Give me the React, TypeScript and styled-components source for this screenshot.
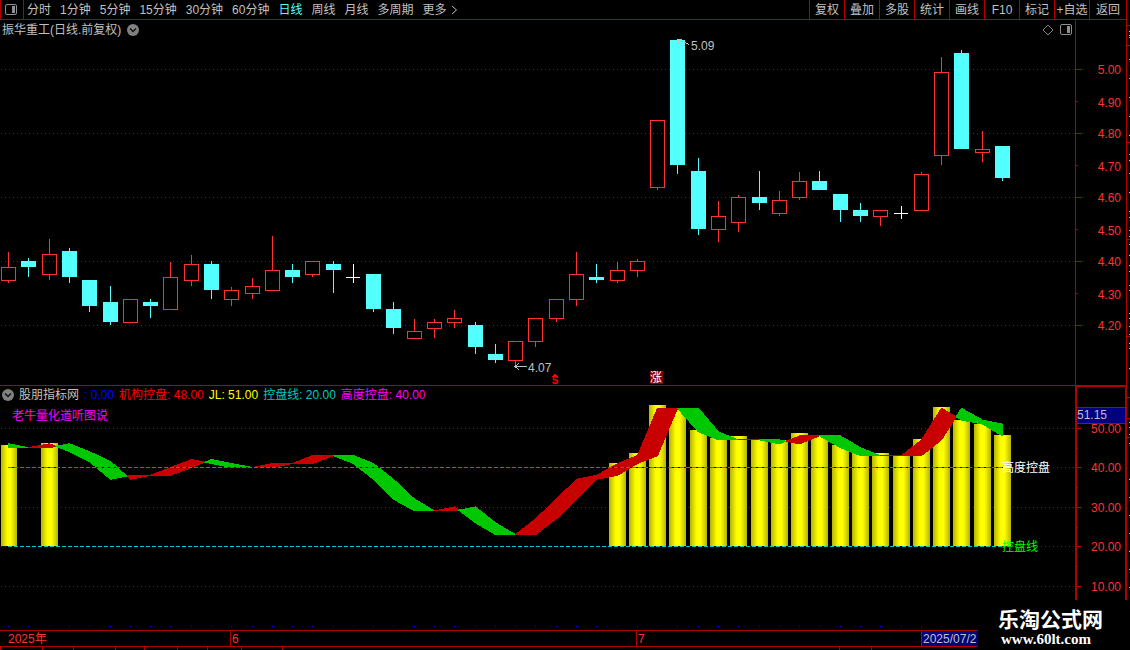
import React from "react";
import styled, { createGlobalStyle } from "styled-components";

const RED_LINE = "#b00000";
const RED = "#ff3232";
const CYAN = "#54ffff";
const GREY = "#c0c0c0";
const MAGENTA = "#ff00ff";
const TEAL = "#00c8c8";

const GlobalStyle = createGlobalStyle`
  * { box-sizing: border-box; }
  html, body { margin: 0; background: #000; }
  body {
    font-family: "Liberation Sans", "Noto Sans CJK SC", sans-serif;
    font-size: 12px;
    line-height: 16px;
    color: ${GREY};
  }
  svg { display: block; }
`;

const Screen = styled.div`
  position: relative;
  display: flex;
  height: 100vh;
  overflow: hidden;
  background: #000;
`;

const Terminal = styled.main`
  flex: 1;
  min-width: 0;
  display: flex;
  flex-direction: column;
  border-right: 1px solid ${RED_LINE};
`;

const Toolbar = styled.header`
  flex: none;
  display: flex;
  height: 20px;
  border-bottom: 1px solid ${RED_LINE};
`;

const PlainButton = styled.button`
  padding: 0;
  border: 0;
  background: none;
  color: ${GREY};
  font: inherit;
  white-space: nowrap;
  cursor: pointer;
`;

const LayoutButton = styled(PlainButton)`
  width: 24px;
  padding-left: 4px;
  border: solid ${RED_LINE};
  border-width: 0 1px;
`;

const Periods = styled.nav`
  flex: 1;
  display: flex;
  align-items: center;
  gap: 9px;
  padding-left: 3px;
`;

const PeriodButton = styled(PlainButton)<{ $active?: boolean }>`
  display: flex;
  align-items: center;
  gap: 4px;
  color: ${(p) => (p.$active ? CYAN : GREY)};
`;

const Actions = styled.div`
  display: flex;
`;

const ActionButton = styled(PlainButton)<{ $wide?: boolean }>`
  width: ${(p) => (p.$wide ? 37 : 35)}px;
  border-left: 1px solid ${RED_LINE};
`;

const Panel = styled.section`
  flex: none;
  display: flex;
`;

const Plot = styled.div<{ $ruled?: boolean }>`
  flex: 1;
  min-width: 0;
  overflow: hidden;
  border-top: ${(p) => (p.$ruled ? `1px solid ${RED_LINE}` : "0")};
`;

const PriceAxis = styled.div`
  width: 51px;
  border-left: 1px solid ${RED_LINE};
`;

const IndicatorAxis = styled.div`
  width: 51px;
  border: solid ${RED_LINE};
  border-width: 2px 1px 0 2px;
`;

const ChartText = styled.text<{ $small?: boolean }>`
  font-family: "Liberation Sans", "Noto Sans CJK SC", sans-serif;
  font-size: ${(p) => (p.$small ? 10 : 12)}px;
  font-weight: ${(p) => (p.$small ? "bold" : "normal")};
`;

const TitleRow = styled.div`
  display: flex;
  align-items: center;
  gap: 6px;
  height: 18px;
  padding: 2px 3px 0 2px;
`;

const TitleTools = styled.div`
  display: flex;
  gap: 6px;
  margin-left: auto;
`;

const IconButton = styled(PlainButton)`
  display: flex;
`;

const IndicatorStack = styled.div`
  display: grid;
  > * { grid-area: 1 / 1; }
`;

const IndicatorHead = styled.div`
  z-index: 1;
  align-self: start;
`;

const Legend = styled.div`
  display: flex;
  align-items: center;
  gap: 5px;
  height: 17px;
  padding-left: 2px;
  white-space: nowrap;
`;

const LegendItem = styled.span<{ $color: string }>`
  color: ${(p) => p.$color};
`;

const Caption = styled.div`
  padding-left: 12px;
  line-height: 26px;
  color: ${MAGENTA};
`;

const Timeline = styled.div`
  flex: none;
  display: flex;
  height: 17px;
  border: solid ${RED_LINE};
  border-width: 1px 0;
`;

const Month = styled.span<{ $width: number; $first?: boolean }>`
  width: ${(p) => p.$width}px;
  padding-left: ${(p) => (p.$first ? 8 : 1)}px;
  border-left: ${(p) => (p.$first ? "0" : `1px solid ${RED_LINE}`)};
  color: ${RED};
`;

const CurrentDate = styled.span`
  width: 57px;
  padding-left: 1px;
  border-left: 1px solid ${RED_LINE};
  background: #000080;
`;

const StatusBar = styled.footer`
  flex: none;
  display: flex;
  height: 20px;
`;

const StatusCell = styled.span<{ $width: number }>`
  flex: none;
  width: ${(p) => p.$width}px;
  border-left: 1px solid ${RED_LINE};
`;

const QuoteEdge = styled.aside`
  width: 3px;
`;

const SiteMark = styled.div`
  position: absolute;
  right: 0;
  bottom: 0;
  width: 152px;
  height: 50px;
  padding: 6px 0 0 20px;
  background: #000;
  color: #fff;
  font-weight: bold;
  white-space: nowrap;
`;

const SiteName = styled.div`
  font-family: "Noto Sans CJK SC", sans-serif;
  font-size: 21px;
  line-height: 25px;
`;

const SiteLink = styled.a`
  display: block;
  padding-left: 3px;
  font-family: "Liberation Serif", serif;
  font-size: 15px;
  line-height: 16px;
  color: #fff;
  text-decoration: none;
`;

type Kind = "up" | "down" | "flat";
/* kind, high, body top, body bottom, low, in plot rows */
type Candle = [Kind, number, number, number, number];

const candles: Candle[] = [
  ["up", 252, 267, 281, 283],
  ["down", 258, 261, 267, 277],
  ["up", 239, 254, 275, 280],
  ["down", 248, 251, 277, 283],
  ["down", 280, 280, 306, 312],
  ["down", 286, 302, 322, 325],
  ["up", 299, 299, 323, 323],
  ["down", 299, 302, 306, 318],
  ["up", 262, 277, 310, 310],
  ["up", 255, 264, 281, 286],
  ["down", 261, 264, 290, 299],
  ["up", 287, 290, 300, 306],
  ["up", 278, 286, 294, 299],
  ["up", 236, 270, 291, 291],
  ["down", 264, 270, 277, 283],
  ["up", 261, 261, 275, 277],
  ["down", 261, 264, 270, 293],
  ["flat", 264, 277, 278, 283],
  ["down", 274, 274, 309, 312],
  ["down", 302, 309, 328, 334],
  ["up", 319, 331, 339, 339],
  ["up", 319, 322, 329, 338],
  ["up", 310, 318, 323, 328],
  ["down", 322, 325, 347, 354],
  ["down", 344, 354, 360, 363],
  ["up", 341, 341, 361, 366],
  ["up", 318, 318, 342, 347],
  ["up", 299, 299, 319, 322],
  ["up", 252, 274, 300, 306],
  ["down", 264, 277, 280, 283],
  ["up", 262, 270, 281, 283],
  ["up", 259, 261, 271, 277],
  ["up", 120, 120, 188, 190],
  ["down", 39, 40, 165, 174],
  ["down", 158, 171, 229, 235],
  ["up", 201, 216, 230, 242],
  ["up", 195, 197, 223, 232],
  ["down", 171, 197, 203, 210],
  ["up", 191, 200, 214, 216],
  ["up", 172, 181, 198, 200],
  ["down", 171, 181, 190, 190],
  ["down", 194, 194, 210, 222],
  ["down", 203, 210, 216, 222],
  ["up", 210, 210, 217, 226],
  ["flat", 206, 213, 214, 219],
  ["up", 172, 174, 211, 211],
  ["up", 57, 72, 156, 165],
  ["down", 50, 53, 149, 149],
  ["up", 131, 149, 153, 162],
  ["down", 146, 146, 178, 181],
];

const dayX = (i: number) => Math.floor(8.58 + 20.285 * i);

/* JL line; the first value is the day before the first candle */
const jl = [
  46, 45, 45, 46, 44, 41.5, 37, 38, 38, 40, 42, 41, 40, 40, 41, 41, 43, 43, 41, 37, 32, 29, 29, 30, 26, 23, 23,
  27, 32, 37, 38, 41, 43, 55, 55, 49, 47, 47, 47, 46, 48, 48, 45, 43, 43, 43, 47, 55, 52, 51, 48,
];

/* day index and top of each control bar */
const bars: [number, number][] = [
  [0, 445], [2, 443], [30, 463], [31, 453], [32, 405], [33, 408], [34, 430], [35, 438], [36, 436], [37, 439],
  [38, 440], [39, 433], [40, 436], [41, 445], [42, 451], [43, 453], [44, 455], [45, 439], [46, 407], [47, 420],
  [48, 424], [49, 435],
];

const levelY = (v: number) => 546 - (v - 20) * 3.95;

function CandleMark({ x, candle }: { x: number; candle: Candle }) {
  const [kind, high, top, bottom, low] = candle;
  if (kind === "flat") {
    return (
      <g fill="#fff">
        <rect x={x} y={high} width={1} height={low - high} />
        <rect x={x - 7} y={top} width={14} height={1} />
      </g>
    );
  }
  if (kind === "down") {
    return (
      <g fill={CYAN}>
        <rect x={x} y={high} width={1} height={low - high} />
        <rect x={x - 7} y={top} width={15} height={bottom - top} />
      </g>
    );
  }
  return (
    <g fill={RED}>
      <rect x={x} y={high} width={1} height={top - high} />
      <rect x={x} y={bottom} width={1} height={low - bottom} />
      <rect x={x - 6.5} y={top + 0.5} width={14} height={bottom - top - 1} fill="none" stroke={RED} />
    </g>
  );
}

function GridLine({ y }: { y: number }) {
  return <line x1={1} x2="100%" y1={y + 0.5} y2={y + 0.5} stroke={RED_LINE} strokeDasharray="1 3" />;
}

function PricePlot() {
  return (
    <svg width="100%" height={347} shapeRendering="crispEdges" role="img" aria-label="日线 K 线图">
      <g transform="translate(0,-38)">
        {[69, 133, 197, 261, 325].map((y) => (
          <GridLine key={y} y={y} />
        ))}
        {candles.map((c, i) => (
          <CandleMark key={i} x={dayX(i)} candle={c} />
        ))}
        <path d="M678 39.5h4M678.500 40v3M679 41.500h4l6 3" fill="none" stroke={GREY} />
        <ChartText x={691} y={50} fill={GREY}>5.09</ChartText>
        <path d="M515 366.500h12M519 363l-4 3.500 4 3.500" fill="none" stroke={GREY} />
        <ChartText x={528} y={372} fill={GREY}>4.07</ChartText>
        <path d="M552 377l2.500-3h1l2.500 3z" fill="#f00" />
        <ChartText $small x={555} y={384} fill="#f00" textAnchor="middle">S</ChartText>
        <rect x={650} y={371} width={13} height={13} fill="#800000" />
        <ChartText x={656} y={382} fill="#fff" textAnchor="middle">涨</ChartText>
      </g>
    </svg>
  );
}

/* Band between the JL line and its value one day earlier: red while rising, green while falling */
function Ribbon() {
  const pieces: React.ReactNode[] = [];
  const piece = (key: string, rising: boolean, pts: number[][]) => {
    const color = rising ? "#c80000" : "#00c800";
    pieces.push(
      <polygon
        key={key}
        points={pts.map((p) => p.join(",")).join(" ")}
        fill={color}
        stroke={color}
        strokeLinejoin="round"
      />
    );
  };
  const y = (v: number) => levelY(v) + 0.5;
  for (let i = 0; i < candles.length - 1; i++) {
    const x0 = dayX(i) + 0.5;
    const x1 = dayX(i + 1) + 0.5;
    const a0 = jl[i + 1];
    const a1 = jl[i + 2];
    const b0 = jl[i];
    const b1 = jl[i + 1];
    const d0 = a0 - b0;
    const d1 = a1 - b1;
    if (d0 * d1 < 0) {
      const t = d0 / (d0 - d1);
      const cx = x0 + (x1 - x0) * t;
      const cy = y(a0 + (a1 - a0) * t);
      piece(`${i}l`, d0 > 0, [[x0, y(a0)], [cx, cy], [x0, y(b0)]]);
      piece(`${i}r`, d1 > 0, [[cx, cy], [x1, y(a1)], [x1, y(b1)]]);
    } else {
      piece(`${i}`, d0 + d1 >= 0, [[x0, y(a0)], [x1, y(a1)], [x1, y(b1)], [x0, y(b0)]]);
    }
  }
  return <g>{pieces}</g>;
}

function IndicatorPlot() {
  return (
    <svg width="100%" height={244} shapeRendering="crispEdges" role="img" aria-label="控盘指标图">
      <defs>
        <linearGradient id="cylinder">
          <stop offset="0" stopColor="#b4b400" />
          <stop offset="0.12" stopColor="#cccc00" />
          <stop offset="0.4" stopColor="#ffff00" />
          <stop offset="0.62" stopColor="#ffff00" />
          <stop offset="0.88" stopColor="#cccc00" />
          <stop offset="1" stopColor="#b4b400" />
        </linearGradient>
      </defs>
      <g transform="translate(0,-386)">
        {[428, 467, 507, 546, 586].map((y) => (
          <GridLine key={y} y={y} />
        ))}
        {bars.map(([day, top]) => {
          const left = Math.max(1, dayX(day) - 8);
          return (
            <rect
              key={day}
              x={left}
              y={top}
              width={dayX(day) + 9 - left}
              height={546 - top}
              fill="url(#cylinder)"
            />
          );
        })}
        <Ribbon />
        <line x1={8} x2={1003} y1={467.5} y2={467.5} stroke="#000" />
        <line x1={8} x2={1003} y1={467.5} y2={467.5} stroke={MAGENTA} strokeDasharray="4 2" />
        <line x1={8} x2={1003} y1={546.5} y2={546.5} stroke="#000" />
        <line x1={8} x2={1003} y1={546.5} y2={546.5} stroke={TEAL} strokeDasharray="4 2" />
        <ChartText x={1002} y={472} fill="#fff">高度控盘</ChartText>
        <ChartText x={1002} y={551} fill="#0f0">控盘线</ChartText>
        {candles.slice(0, 48).map((_, i) => (
          <rect key={i} x={dayX(i)} y={626} width={1} height={1} fill="#00f" />
        ))}
      </g>
    </svg>
  );
}

function PriceScale() {
  const labels = ["5.00", "4.90", "4.80", "4.70", "4.60", "4.50", "4.40", "4.30", "4.20"];
  return (
    <svg width={50} height={365} shapeRendering="crispEdges">
      <g transform="translate(-1076,-20)">
        {labels.map((label, i) => {
          const y = 69 + 32 * i;
          return (
            <g key={label}>
              <rect x={1076} y={y} width={i % 2 ? 2 : 5} height={1} fill={RED_LINE} />
              <ChartText x={1121} y={y + 5 + (i % 2)} fill={RED} textAnchor="end">{label}</ChartText>
            </g>
          );
        })}
      </g>
    </svg>
  );
}

function IndicatorScale() {
  return (
    <svg width={48} height={243} shapeRendering="crispEdges">
      <g transform="translate(-1077,-387)">
        {[50, 40, 30, 20, 10].map((v) => {
          const y = Math.round(levelY(v));
          return (
            <g key={v}>
              <rect x={1077} y={y} width={4} height={1} fill={RED_LINE} />
              <rect x={1077} y={y + 20} width={1} height={1} fill={RED_LINE} />
              <ChartText x={1121} y={y + 5} fill={RED} textAnchor="end">{v}.00</ChartText>
            </g>
          );
        })}
        <rect x={1076} y={407} width={50} height={17} fill={RED_LINE} />
        <rect x={1076} y={408} width={50} height={15} fill="#000080" />
        <ChartText x={1077} y={419} fill={GREY}>51.15</ChartText>
      </g>
    </svg>
  );
}

function PanelIcon() {
  return (
    <svg width={12} height={11} aria-hidden="true">
      <rect x={0.5} y={0.5} width={11} height={10} rx={1.5} fill="none" stroke="#909090" />
      <rect x={7} y={2} width={3} height={7} fill="#909090" />
    </svg>
  );
}

function RoundChevron() {
  return (
    <svg width={12} height={12} aria-hidden="true">
      <circle cx={6} cy={6} r={6} fill="#808080" />
      <path d="M3 4.500l3 3 3-3" fill="none" stroke="#111" strokeWidth={1.5} />
    </svg>
  );
}

const edgeRed = [25, 45, 142, 239, 336, 397, 418, 437];
const edgeGrey = [
  31, 35, 37, 59, 78, 97, 116, 135, 154, 160, 173, 192, 211, 217, 230, 236, 244, 255, 265, 271, 285, 290, 313,
  318, 326, 334, 343, 348, 368, 422, 427, 434, 443, 479, 497, 515, 533, 551, 569, 587,
];

const periods = ["分时", "1分钟", "5分钟", "15分钟", "30分钟", "60分钟", "日线", "周线", "月线", "多周期"];
const actions = ["复权", "叠加", "多股", "统计", "画线", "F10", "标记", "+自选", "返回"];
const statusWidths = [42, 31, 42, 29, 33, 30, 34, 41, 557, 32, 100];

export default function App() {
  return (
    <Screen>
      <GlobalStyle />
      <Terminal>
        <Toolbar>
          <LayoutButton aria-label="布局"><PanelIcon /></LayoutButton>
          <Periods aria-label="周期">
            {periods.map((p) => (
              <PeriodButton key={p} $active={p === "日线"}>{p}</PeriodButton>
            ))}
            <PeriodButton>
              更多
              <svg width={7} height={10} aria-hidden="true">
                <path d="M1 1l4.500 4L1 9" fill="none" stroke={GREY} />
              </svg>
            </PeriodButton>
          </Periods>
          <Actions>
            {actions.map((a) => (
              <ActionButton key={a} $wide={a === "返回"}>{a}</ActionButton>
            ))}
          </Actions>
        </Toolbar>

        <Panel>
          <Plot>
            <TitleRow>
              <span>振华重工(日线.前复权)</span>
              <IconButton aria-label="切换"><RoundChevron /></IconButton>
              <TitleTools>
                <IconButton aria-label="标注">
                  <svg width={12} height={12} aria-hidden="true">
                    <path d="M6 1l5 5-5 5-5-5z" fill="none" stroke="#808080" />
                  </svg>
                </IconButton>
                <IconButton aria-label="侧栏"><PanelIcon /></IconButton>
              </TitleTools>
            </TitleRow>
            <PricePlot />
          </Plot>
          <PriceAxis><PriceScale /></PriceAxis>
        </Panel>

        <Panel>
          <Plot $ruled>
            <IndicatorStack>
              <IndicatorPlot />
              <IndicatorHead>
                <Legend>
                  <IconButton aria-label="指标菜单"><RoundChevron /></IconButton>
                  <LegendItem $color={GREY}>股朋指标网</LegendItem>
                  <LegendItem $color="#0000ff">: 0.00</LegendItem>
                  <LegendItem $color="#ff0000">机构控盘: 48.00</LegendItem>
                  <LegendItem $color="#ffff00">JL: 51.00</LegendItem>
                  <LegendItem $color={TEAL}>控盘线: 20.00</LegendItem>
                  <LegendItem $color={MAGENTA}>高度控盘: 40.00</LegendItem>
                </Legend>
                <Caption>老牛量化道听图说</Caption>
              </IndicatorHead>
            </IndicatorStack>
          </Plot>
          <IndicatorAxis><IndicatorScale /></IndicatorAxis>
        </Panel>

        <Timeline>
          <Month $first $width={230}>2025年</Month>
          <Month $width={406}>6</Month>
          <Month $width={285}>7</Month>
          <CurrentDate>2025/07/2</CurrentDate>
        </Timeline>
        <StatusBar>
          {statusWidths.map((w, i) => (
            <StatusCell key={i} $width={w} />
          ))}
        </StatusBar>
      </Terminal>

      <QuoteEdge>
        <svg width={3} height="100%" shapeRendering="crispEdges" aria-hidden="true">
          {edgeRed.map((y) => (
            <rect key={y} x={0} y={y} width={3} height={1} fill={RED_LINE} />
          ))}
          {edgeGrey.map((y) => (
            <rect key={y} x={2} y={y} width={1} height={1} fill={GREY} />
          ))}
        </svg>
      </QuoteEdge>

      <SiteMark>
        <SiteName>乐淘公式网</SiteName>
        <SiteLink href="#">www.60lt.com</SiteLink>
      </SiteMark>
    </Screen>
  );
}
